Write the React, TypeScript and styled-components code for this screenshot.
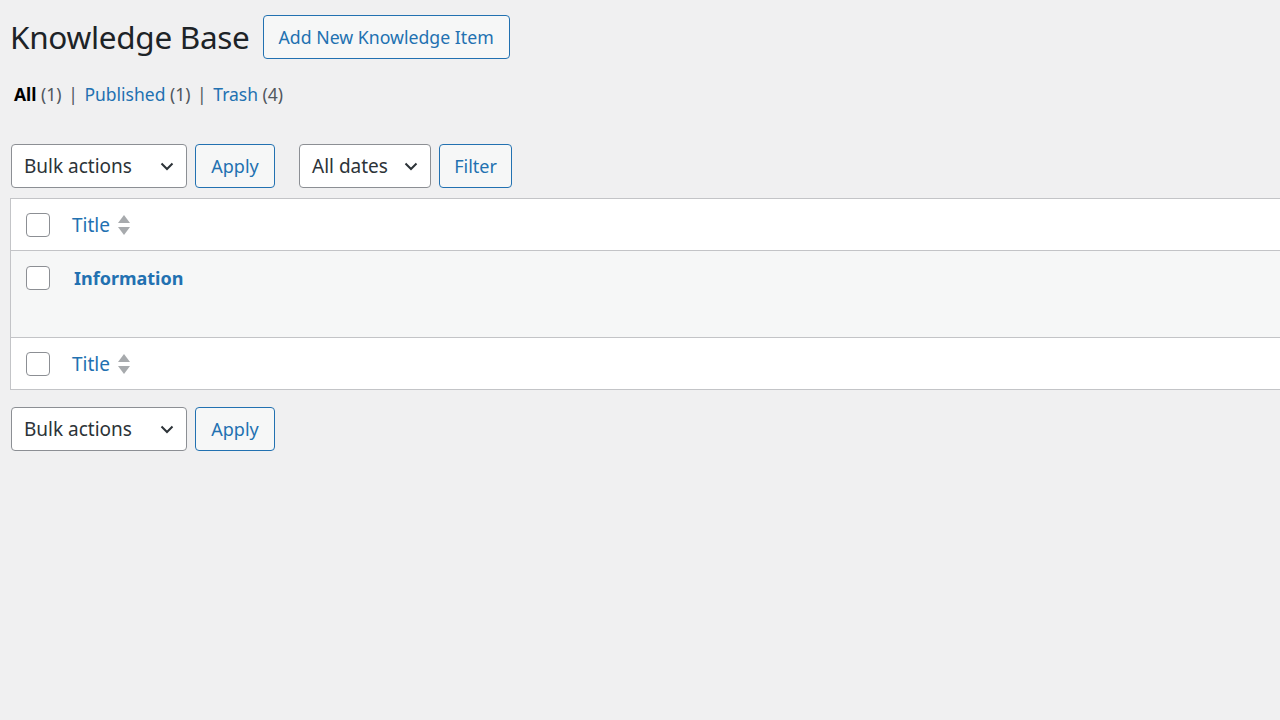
import React from "react";
import styled, { createGlobalStyle } from "styled-components";

const GlobalStyle = createGlobalStyle`
  html, body {
    margin: 0;
    padding: 0;
    background: #f0f0f1;
    overflow: hidden;
  }
  body {
    font-family: "Noto Sans", "Open Sans", Arial, sans-serif;
    color: #1d2327;
  }
`;

const ChevronDown = () => (
  <svg width="16" height="16" viewBox="0 0 16 16" fill="none">
    <path d="M2.5 5.5 L8 11 L13.5 5.5" stroke="#2c3338" strokeWidth="2" />
  </svg>
);

const SortIcon = () => (
  <svg width="14" height="22" viewBox="0 0 14 22">
    <path d="M7 1 L13 9 H1 Z" fill="#a7aaad" />
    <path d="M1 13 H13 L7 21 Z" fill="#a7aaad" />
  </svg>
);

export default function App() {
  return (
    <>
      <GlobalStyle />
      <Wrap>
        <Heading>
          <PageTitle>Knowledge Base</PageTitle>
          <OutlineButton>Add New Knowledge Item</OutlineButton>
        </Heading>

        <SubSub>
          <SubItem current>All</SubItem> <Count>(1)</Count> <Sep>|</Sep>{" "}
          <SubItem>Published</SubItem> <Count>(1)</Count> <Sep>|</Sep>{" "}
          <SubItem>Trash</SubItem> <Count>(4)</Count>
        </SubSub>

        <TableNav top>
          <Select width={176}>
            Bulk actions
            <ChevronDown />
          </Select>
          <ActionButton width={80}>Apply</ActionButton>
          <Spacer />
          <Select width={132}>
            All dates
            <ChevronDown />
          </Select>
          <ActionButton width={73}>Filter</ActionButton>
        </TableNav>

        <Table>
          <HeadRow>
            <CheckCell>
              <CheckBox />
            </CheckCell>
            <ColumnTitle>
              Title
              <SortIcon />
            </ColumnTitle>
          </HeadRow>
          <BodyRow>
            <CheckCell>
              <CheckBox />
            </CheckCell>
            <RowTitle>Information</RowTitle>
          </BodyRow>
          <HeadRow foot>
            <CheckCell>
              <CheckBox />
            </CheckCell>
            <ColumnTitle>
              Title
              <SortIcon />
            </ColumnTitle>
          </HeadRow>
        </Table>

        <TableNav>
          <Select width={176}>
            Bulk actions
            <ChevronDown />
          </Select>
          <ActionButton width={80}>Apply</ActionButton>
        </TableNav>
      </Wrap>
    </>
  );
}

const Wrap = styled.div`
  padding: 15px 0 0 10px;
  width: 1290px;
`;

const Heading = styled.div`
  display: flex;
  align-items: center;
  gap: 13px;
  height: 43px;
`;

const PageTitle = styled.h1`
  margin: 0;
  font-size: 31.5px;
  font-weight: 400;
  color: #1d2327;
  letter-spacing: -0.3px;
  line-height: 43px;
`;

const OutlineButton = styled.button`
  height: 44px;
  padding: 0 15px;
  border: 1px solid #2271b1;
  border-radius: 4px;
  background: #f6f7f7;
  color: #2271b1;
  font-family: inherit;
  font-size: 17.7px;
`;

const SubSub = styled.div`
  margin: 23px 0 0 4px;
  font-size: 17.5px;
  line-height: 26px;
  height: 26px;
  white-space: pre;
`;

const SubItem = styled.a<{ current?: boolean }>`
  color: ${(p) => (p.current ? "#000" : "#2271b1")};
  font-weight: ${(p) => (p.current ? 700 : 400)};
`;

const Count = styled.span`
  color: #50575e;
`;

const Sep = styled.span`
  color: #50575e;
  margin: 0 2px;
`;

const TableNav = styled.div<{ top?: boolean }>`
  display: flex;
  align-items: center;
  gap: 8px;
  margin: ${(p) => (p.top ? "37px 0 10px 1px" : "17px 0 0 1px")};
  height: 44px;
`;

const Spacer = styled.div`
  width: 8px;
`;

const Select = styled.div<{ width: number }>`
  box-sizing: border-box;
  width: ${(p) => p.width}px;
  height: 44px;
  display: flex;
  align-items: center;
  justify-content: space-between;
  padding: 0 11px 0 12px;
  border: 1px solid #8c8f94;
  border-radius: 4px;
  background: #fff;
  color: #2c3338;
  font-size: 19px;
`;

const ActionButton = styled.button<{ width: number }>`
  box-sizing: border-box;
  width: ${(p) => p.width}px;
  height: 44px;
  border: 1px solid #2271b1;
  border-radius: 4px;
  background: #f6f7f7;
  color: #2271b1;
  font-family: inherit;
  font-size: 18px;
`;

const Table = styled.div`
  border: 1px solid #c3c4c7;
  border-right: none;
  background: #fff;
`;

const HeadRow = styled.div<{ foot?: boolean }>`
  display: flex;
  align-items: center;
  height: 51px;
  background: #fff;
  border-top: ${(p) => (p.foot ? "1px solid #c3c4c7" : "none")};
  border-bottom: ${(p) => (p.foot ? "none" : "1px solid #c3c4c7")};
`;

const BodyRow = styled.div`
  display: flex;
  align-items: flex-start;
  height: 86px;
  background: #f6f7f7;
`;

const CheckCell = styled.div`
  box-sizing: border-box;
  width: 60px;
  padding-left: 15px;
  ${BodyRow} & {
    padding-top: 15px;
  }
`;

const CheckBox = styled.span`
  box-sizing: border-box;
  display: block;
  width: 24px;
  height: 24px;
  border: 1px solid #8c8f94;
  border-radius: 4px;
  background: #fff;
`;

const ColumnTitle = styled.a`
  display: flex;
  align-items: center;
  gap: 7px;
  color: #2271b1;
  font-size: 19px;
  margin-left: 1px;
`;

const RowTitle = styled.a`
  margin: 15px 0 0 3px;
  color: #2271b1;
  font-size: 18px;
  font-weight: 700;
`;
